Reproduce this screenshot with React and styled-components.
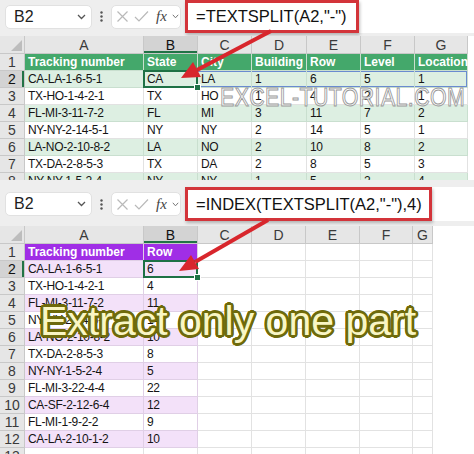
import React from "react";
import styled, { createGlobalStyle } from "styled-components";

const GlobalStyle = createGlobalStyle`
  html, body { margin: 0; padding: 0; background: #fff; }
  body { font-family: "Liberation Sans", Arial, sans-serif; }
`;

const ring = (r, color) =>
  Array.from({ length: 16 }, (_, i) => {
    const a = (i / 16) * Math.PI * 2;
    return `${(Math.cos(a) * r).toFixed(2)}px ${(Math.sin(a) * r).toFixed(2)}px 0 ${color}`;
  }).join(", ");

const Page = styled.div`
  position: relative;
  width: 474px;
  height: 454px;
  overflow: hidden;
  background: #fff;
  display: flex;
  flex-direction: column;
`;

const Section = styled.div`
  flex-shrink: 0;
  box-sizing: border-box;
  height: ${p => p.$height}px;
  padding-top: ${p => p.$padTop || 0}px;
  overflow: hidden;
  background: #eeeeee;
`;

const FormulaBar = styled.div`
  display: flex;
  align-items: center;
  height: ${p => p.$height}px;
  margin-bottom: ${p => p.$gap}px;
`;

const NameBox = styled.div`
  box-sizing: border-box;
  width: 87px;
  height: 24px;
  margin-left: 5px;
  padding: 0 5px 0 8px;
  display: flex;
  align-items: center;
  justify-content: space-between;
  background: #fff;
  border: 1px solid #e1e1e1;
  border-radius: 5px;
  font-size: 16px;
  color: #1e1e1e;
`;

const Dots = styled.div`
  width: 19px;
  display: flex;
  justify-content: center;
`;

const FxBox = styled.div`
  box-sizing: border-box;
  width: 70px;
  height: 24px;
  padding-left: 4px;
  display: flex;
  align-items: center;
  gap: 5px;
  background: #fff;
  border: 1px solid #e1e1e1;
  border-radius: 5px;
`;

const Fx = styled.span`
  font-family: "Liberation Serif", "Times New Roman", serif;
  font-style: italic;
  font-size: 15px;
  color: #444;
  margin-left: 2px;
`;

const FormulaField = styled.div`
  flex: 1;
  align-self: stretch;
  margin-left: 4px;
  background: #fff;
  display: flex;
`;

const RedBox = styled.div`
  box-sizing: border-box;
  width: ${p => p.$width}px;
  height: 100%;
  padding-left: 8px;
  display: flex;
  align-items: center;
  border: 3px solid #d3343a;
  box-shadow: 1px 2px 3px rgba(0, 0, 0, 0.25);
  font-size: 16.5px;
  color: #111;
  white-space: nowrap;
`;

const GridArea = styled.div`
  background: #fff;
  height: 100%;
`;

const Grid = styled.div`
  display: grid;
  grid-template-columns: ${p => p.$cols};
  grid-template-rows: 18px;
  grid-auto-rows: 17px;
  width: max-content;
`;

const Corner = styled.div`
  position: relative;
  box-sizing: border-box;
  background: #e6e6e6;
  border-right: 1px solid #c8c8c8;
  border-bottom: 1px solid #c8c8c8;
  &::after {
    content: "";
    position: absolute;
    right: 2px;
    bottom: 2px;
    border-left: 11px solid transparent;
    border-bottom: 11px solid #bdbdbd;
  }
`;

const ColHead = styled.div`
  box-sizing: border-box;
  display: flex;
  align-items: center;
  justify-content: center;
  background: ${p => (p.$active ? "#d3d3d3" : "#e6e6e6")};
  border-right: 1px solid #c8c8c8;
  border-bottom: 1px solid #c8c8c8;
  box-shadow: ${p => (p.$active ? "inset 0 -2px 0 #217346" : "none")};
  font-size: 14px;
  color: ${p => (p.$active ? "#111" : "#3a3a3a")};
`;

const RowHead = styled(ColHead)`
  box-shadow: ${p => (p.$active ? "inset -2px 0 0 #217346" : "none")};
`;

const spillShadow = edge => {
  if (edge === "mid") return "inset 0 1px 0 #6a8bd0, inset 0 -1px 0 #6a8bd0";
  if (edge === "end")
    return "inset 0 1px 0 #6a8bd0, inset 0 -1px 0 #6a8bd0, inset -1px 0 0 #6a8bd0";
  return "none";
};

const Cell = styled.div`
  position: relative;
  box-sizing: border-box;
  padding-left: 3px;
  display: flex;
  align-items: center;
  white-space: nowrap;
  background: ${p => p.$bg || "#fff"};
  border-right: 1px solid ${p => p.$line || "#dcdcdc"};
  border-bottom: 1px solid ${p => p.$line || "#dcdcdc"};
  box-shadow: ${p => spillShadow(p.$spill)};
  color: ${p => p.$color || "#141414"};
  font-size: 12px;
  letter-spacing: ${p => (p.$bold ? "0" : "-0.3px")};
  font-weight: ${p => (p.$bold ? 700 : 400)};
  z-index: ${p => (p.$selected ? 2 : 1)};

  ${p =>
    p.$selected &&
    `
    &::after {
      content: "";
      position: absolute;
      left: -1px; top: -1px; right: -1px; bottom: -1px;
      border: 2px solid #1e7145;
    }
    &::before {
      content: "";
      position: absolute;
      right: -4px; bottom: -4px;
      width: 5px; height: 5px;
      background: #1e7145;
      border: 1px solid #fff;
      z-index: 3;
    }
  `}
`;

const Watermark = styled.div`
  position: absolute;
  left: 220px;
  top: 84px;
  font-size: 26px;
  line-height: 1;
  letter-spacing: 0.5px;
  transform: scaleX(0.82);
  transform-origin: left top;
  color: rgba(255, 255, 255, 0.85);
  -webkit-text-stroke: 1px #999;
  white-space: nowrap;
  z-index: 5;
`;

const Title = styled.div`
  position: absolute;
  left: 40px;
  top: 301px;
  font-size: 41px;
  line-height: 1;
  color: #f9f6c4;
  text-shadow: ${ring(2.7, "#6e6a0b")};
  white-space: nowrap;
  z-index: 6;
`;

const Overlay = styled.svg`
  position: absolute;
  left: 0;
  top: 0;
  z-index: 7;
  pointer-events: none;
`;

const Chevron = () => (
  <svg width="9" height="6" viewBox="0 0 9 6">
    <path d="M1 1 L4.5 4.5 L8 1" fill="none" stroke="#555" strokeWidth="1.3" />
  </svg>
);

const Bar = ({ height, gap, boxWidth, formula }) => (
  <FormulaBar $height={height} $gap={gap}>
    <NameBox>
      <span>B2</span>
      <Chevron />
    </NameBox>
    <Dots>
      <svg width="3" height="11" viewBox="0 0 3 11">
        <circle cx="1.5" cy="1.5" r="1.2" fill="#555" />
        <circle cx="1.5" cy="5.5" r="1.2" fill="#555" />
        <circle cx="1.5" cy="9.5" r="1.2" fill="#555" />
      </svg>
    </Dots>
    <FxBox>
      <svg width="13" height="13" viewBox="0 0 13 13">
        <path d="M1.5 1.5 L11.5 11.5 M11.5 1.5 L1.5 11.5" stroke="#b9b9b9" strokeWidth="1.2" />
      </svg>
      <svg width="15" height="13" viewBox="0 0 15 13">
        <path d="M1 7 L5 11 L14 1.5" fill="none" stroke="#b9b9b9" strokeWidth="1.2" />
      </svg>
      <Fx>fx</Fx>
      <svg width="7" height="5" viewBox="0 0 7 5">
        <path d="M0.8 0.8 L3.5 3.8 L6.2 0.8" fill="none" stroke="#777" strokeWidth="1" />
      </svg>
    </FxBox>
    <FormulaField>
      <RedBox $width={boxWidth}>{formula}</RedBox>
    </FormulaField>
  </FormulaBar>
);

const LETTERS = ["A", "B", "C", "D", "E", "F", "G"];

const topHead = ["Tracking number", "State", "City", "Building", "Row", "Level", "Location"];
const topRows = [
  ["CA-LA-1-6-5-1", "CA", "LA", "1", "6", "5", "1"],
  ["TX-HO-1-4-2-1", "TX", "HO", "1", "4", "2", "1"],
  ["FL-MI-3-11-7-2", "FL", "MI", "3", "11", "7", "2"],
  ["NY-NY-2-14-5-1", "NY", "NY", "2", "14", "5", "1"],
  ["LA-NO-2-10-8-2", "LA", "NO", "2", "10", "8", "2"],
  ["TX-DA-2-8-5-3", "TX", "DA", "2", "8", "5", "3"],
  ["NY-NY-1-5-2-4", "NY", "NY", "1", "5", "2", "4"],
];

const bottomRows = [
  ["CA-LA-1-6-5-1", "6"],
  ["TX-HO-1-4-2-1", "4"],
  ["FL-MI-3-11-7-2", "11"],
  ["NY-NY-2-14-5-1", "14"],
  ["LA-NO-2-10-8-2", "10"],
  ["TX-DA-2-8-5-3", "8"],
  ["NY-NY-1-5-2-4", "5"],
  ["FL-MI-3-22-4-4", "22"],
  ["CA-SF-2-12-6-4", "12"],
  ["FL-MI-1-9-2-2", "9"],
  ["CA-LA-2-10-1-2", "10"],
  ["", ""],
];

const GREEN = { head: "#44a86b", band: "#ddefe2", line: "#c9dfcf" };
const PURPLE = { head: "#a02ee6", band: "#f3e1f9", line: "#e0cfe6" };

const TopSheet = () => (
  <GridArea>
    <Grid $cols="25px 119px 54px 54px 55px 54px 54px 53px">
      <Corner />
      {LETTERS.map(l => (
        <ColHead key={l} $active={l === "B"}>{l}</ColHead>
      ))}
      <RowHead>1</RowHead>
      {topHead.map(h => (
        <Cell key={h} $bg={GREEN.head} $line={GREEN.line} $color="#fff" $bold>
          {h}
        </Cell>
      ))}
      {topRows.map((row, r) => (
        <React.Fragment key={r}>
          <RowHead $active={r === 0}>{r + 2}</RowHead>
          {row.map((v, c) => (
            <Cell
              key={c}
              $bg={r % 2 === 0 ? GREEN.band : "#fff"}
              $line={r % 2 === 0 ? GREEN.line : "#e2e2e2"}
              $selected={r === 0 && c === 1}
              $spill={r === 0 && c > 1 ? (c === 6 ? "end" : "mid") : undefined}
            >
              {v}
            </Cell>
          ))}
        </React.Fragment>
      ))}
    </Grid>
  </GridArea>
);

const BottomSheet = () => (
  <GridArea>
    <Grid $cols="25px 119px 54px 54px 54px 54px 53px 20px">
      <Corner />
      {LETTERS.map(l => (
        <ColHead key={l} $active={l === "B"}>{l}</ColHead>
      ))}
      <RowHead>1</RowHead>
      {["Tracking number", "Row", "", "", "", "", ""].map((h, c) => (
        <Cell
          key={c}
          $bg={c < 2 ? PURPLE.head : "#fff"}
          $line={c < 2 ? PURPLE.line : "#e2e2e2"}
          $color="#fff"
          $bold
        >
          {h}
        </Cell>
      ))}
      {bottomRows.map((row, r) => {
        const filled = row[0] !== "";
        const banded = filled && r % 2 === 0;
        return (
          <React.Fragment key={r}>
            <RowHead $active={r === 0}>{r + 2}</RowHead>
            {[...row, "", "", "", "", ""].map((v, c) => (
              <Cell
                key={c}
                $bg={c < 2 && banded ? PURPLE.band : "#fff"}
                $line={c < 2 && filled ? PURPLE.line : "#e2e2e2"}
                $selected={r === 0 && c === 1}
              >
                {v}
              </Cell>
            ))}
          </React.Fragment>
        );
      })}
    </Grid>
  </GridArea>
);

const Arrows = () => (
  <Overlay width="474" height="454" viewBox="0 0 474 454">
    <g fill="#d8262c" stroke="#d8262c">
      <line x1="271" y1="31" x2="197" y2="70" strokeWidth="4" />
      <polygon points="181,78 201,77 193,62" stroke="none" />
      <line x1="268" y1="220" x2="195" y2="262" strokeWidth="4" />
      <polygon points="179,271 199,269 191,255" stroke="none" />
    </g>
  </Overlay>
);

export default function App() {
  return (
    <Page>
      <GlobalStyle />
      <Section $height={180}>
        <Bar height={33} gap={3} boxWidth={174} formula={'=TEXTSPLIT(A2,"-")'} />
        <TopSheet />
      </Section>
      <Section $height={274} $padTop={7}>
        <Bar height={34} gap={5} boxWidth={247} formula={'=INDEX(TEXTSPLIT(A2,"-"),4)'} />
        <BottomSheet />
      </Section>
      <Watermark>EXCEL-TUTORIAL.COM</Watermark>
      <Title>Extract only one part</Title>
      <Arrows />
    </Page>
  );
}
